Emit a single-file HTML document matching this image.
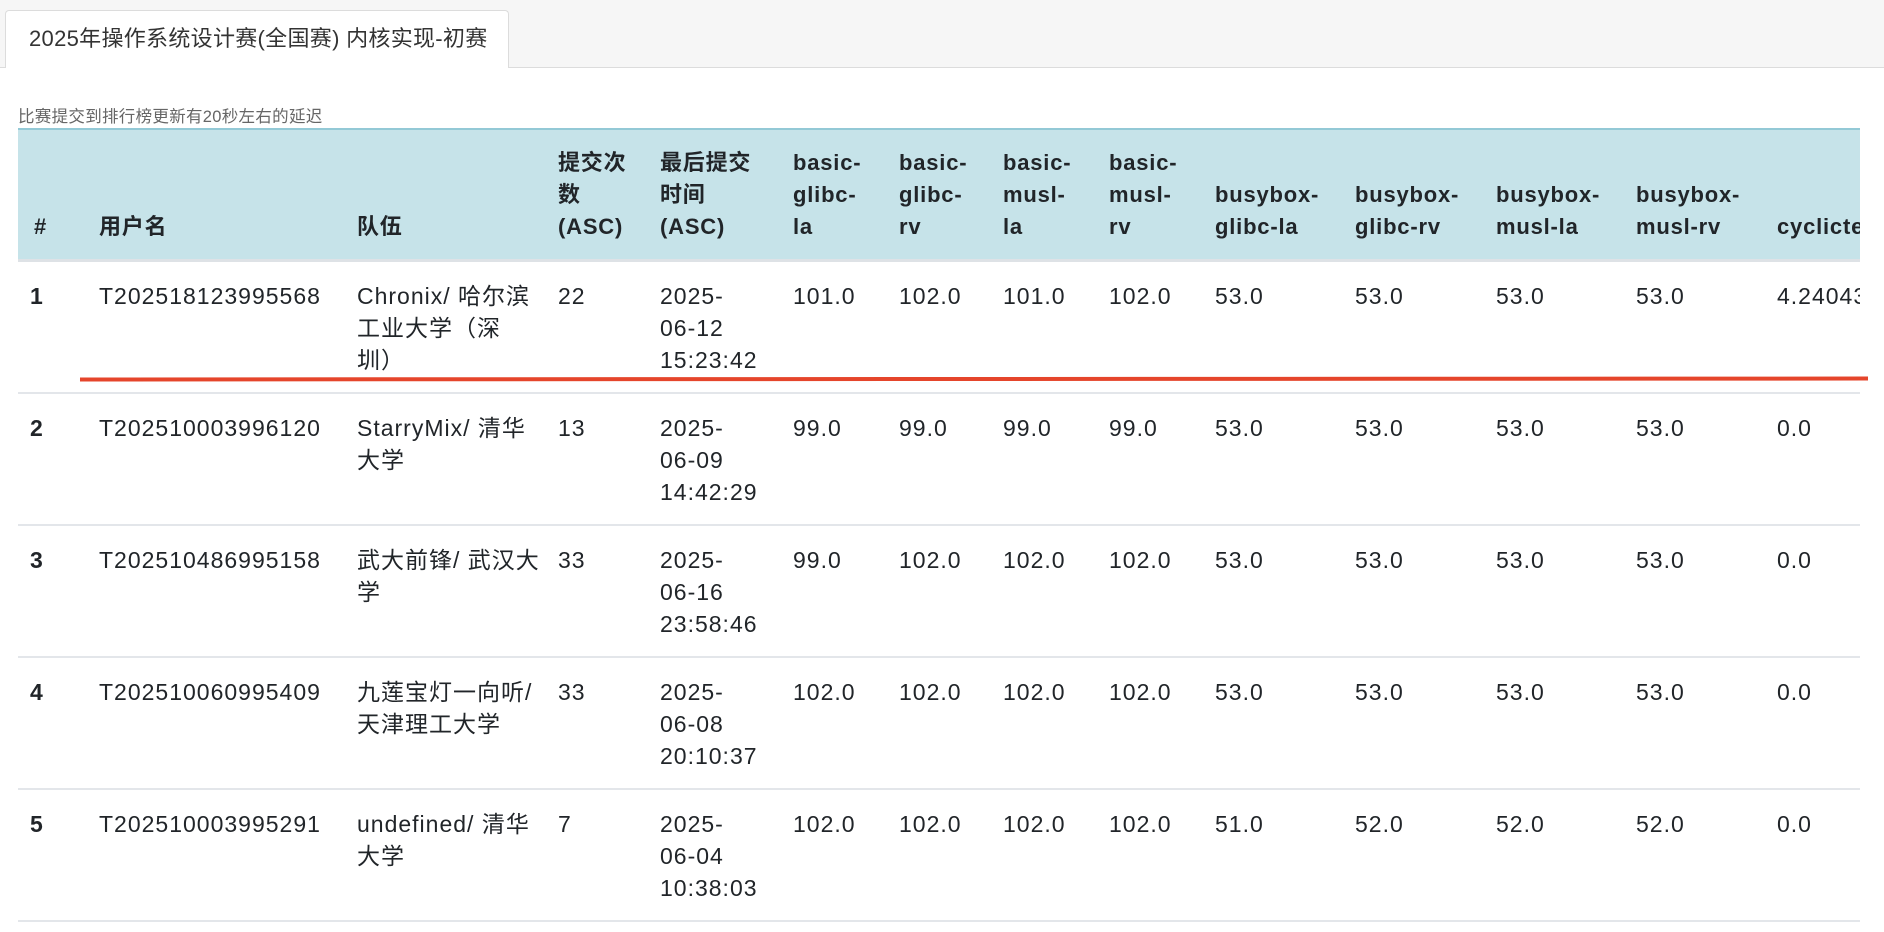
<!DOCTYPE html>
<html><head><meta charset="utf-8"><style>
*{margin:0;padding:0;box-sizing:border-box}
body{width:1884px;height:932px;overflow:hidden;background:#fff;font-family:"Liberation Sans","Noto Sans CJK SC",sans-serif;color:#212529;position:relative}
.top{position:absolute;left:0;top:0;width:1884px;height:68px;background:#f6f6f6;border-bottom:1px solid #dcdcdc}
.tab{position:absolute;left:5px;top:10px;width:504px;height:58px;background:#fff;border:1px solid #dcdcdc;border-bottom:none;border-radius:4px 4px 0 0;font-size:22px;line-height:56px;padding-left:23px;color:#333;letter-spacing:0.3px}
.note{position:absolute;left:18px;top:103px;font-size:16.5px;color:#666;letter-spacing:0.3px}
.wrap{position:absolute;left:18px;top:128px;width:1842px;height:804px;overflow:hidden}
.head{position:absolute;left:0;top:0;width:1842px;height:134px;background:#c6e3e9;border-top:2px solid #93c9d6;border-bottom:3px solid #dee2e6}
.row{position:absolute;left:0;width:1842px;height:132px;border-bottom:2px solid #e3e6ea}
.c{position:absolute;white-space:nowrap;font-size:23px;line-height:32px;letter-spacing:1px}
.h{font-weight:bold;font-size:22px;letter-spacing:0.8px;line-height:32px;bottom:16px;position:absolute;white-space:nowrap}
.b{font-weight:bold}
.red{position:absolute;left:80px;top:377px;width:1788px;height:4px;background:#e5452b;transform:rotate(-0.03deg)}
</style></head><body>
<div class="top"><div class="tab">2025年操作系统设计赛(全国赛) 内核实现-初赛</div></div>
<div class="note">比赛提交到排行榜更新有20秒左右的延迟</div>
<div class="wrap">
<div class="head">
<div class="h" style="left:16px">#</div>
<div class="h" style="left:81px">用户名</div>
<div class="h" style="left:339px">队伍</div>
<div class="h" style="left:540px">提交次<br>数<br>(ASC)</div>
<div class="h" style="left:642px">最后提交<br>时间<br>(ASC)</div>
<div class="h" style="left:775px">basic-<br>glibc-<br>la</div>
<div class="h" style="left:881px">basic-<br>glibc-<br>rv</div>
<div class="h" style="left:985px">basic-<br>musl-<br>la</div>
<div class="h" style="left:1091px">basic-<br>musl-<br>rv</div>
<div class="h" style="left:1197px">busybox-<br>glibc-la</div>
<div class="h" style="left:1337px">busybox-<br>glibc-rv</div>
<div class="h" style="left:1478px">busybox-<br>musl-la</div>
<div class="h" style="left:1618px">busybox-<br>musl-rv</div>
<div class="h" style="left:1759px">cyclictest</div>
</div>
<div class="row" style="top:134px">
<div class="c b" style="left:12px;top:18px">1</div>
<div class="c" style="left:81px;top:18px">T202518123995568</div>
<div class="c" style="left:339px;top:18px">Chronix/ 哈尔滨<br>工业大学（深<br>圳）</div>
<div class="c" style="left:540px;top:18px">22</div>
<div class="c" style="left:642px;top:18px">2025-<br>06-12<br>15:23:42</div>
<div class="c" style="left:775px;top:18px">101.0</div>
<div class="c" style="left:881px;top:18px">102.0</div>
<div class="c" style="left:985px;top:18px">101.0</div>
<div class="c" style="left:1091px;top:18px">102.0</div>
<div class="c" style="left:1197px;top:18px">53.0</div>
<div class="c" style="left:1337px;top:18px">53.0</div>
<div class="c" style="left:1478px;top:18px">53.0</div>
<div class="c" style="left:1618px;top:18px">53.0</div>
<div class="c" style="left:1759px;top:18px">4.240433</div>
</div>
<div class="row" style="top:266px">
<div class="c b" style="left:12px;top:18px">2</div>
<div class="c" style="left:81px;top:18px">T202510003996120</div>
<div class="c" style="left:339px;top:18px">StarryMix/ 清华<br>大学</div>
<div class="c" style="left:540px;top:18px">13</div>
<div class="c" style="left:642px;top:18px">2025-<br>06-09<br>14:42:29</div>
<div class="c" style="left:775px;top:18px">99.0</div>
<div class="c" style="left:881px;top:18px">99.0</div>
<div class="c" style="left:985px;top:18px">99.0</div>
<div class="c" style="left:1091px;top:18px">99.0</div>
<div class="c" style="left:1197px;top:18px">53.0</div>
<div class="c" style="left:1337px;top:18px">53.0</div>
<div class="c" style="left:1478px;top:18px">53.0</div>
<div class="c" style="left:1618px;top:18px">53.0</div>
<div class="c" style="left:1759px;top:18px">0.0</div>
</div>
<div class="row" style="top:398px">
<div class="c b" style="left:12px;top:18px">3</div>
<div class="c" style="left:81px;top:18px">T202510486995158</div>
<div class="c" style="left:339px;top:18px">武大前锋/ 武汉大<br>学</div>
<div class="c" style="left:540px;top:18px">33</div>
<div class="c" style="left:642px;top:18px">2025-<br>06-16<br>23:58:46</div>
<div class="c" style="left:775px;top:18px">99.0</div>
<div class="c" style="left:881px;top:18px">102.0</div>
<div class="c" style="left:985px;top:18px">102.0</div>
<div class="c" style="left:1091px;top:18px">102.0</div>
<div class="c" style="left:1197px;top:18px">53.0</div>
<div class="c" style="left:1337px;top:18px">53.0</div>
<div class="c" style="left:1478px;top:18px">53.0</div>
<div class="c" style="left:1618px;top:18px">53.0</div>
<div class="c" style="left:1759px;top:18px">0.0</div>
</div>
<div class="row" style="top:530px">
<div class="c b" style="left:12px;top:18px">4</div>
<div class="c" style="left:81px;top:18px">T202510060995409</div>
<div class="c" style="left:339px;top:18px">九莲宝灯一向听/<br>天津理工大学</div>
<div class="c" style="left:540px;top:18px">33</div>
<div class="c" style="left:642px;top:18px">2025-<br>06-08<br>20:10:37</div>
<div class="c" style="left:775px;top:18px">102.0</div>
<div class="c" style="left:881px;top:18px">102.0</div>
<div class="c" style="left:985px;top:18px">102.0</div>
<div class="c" style="left:1091px;top:18px">102.0</div>
<div class="c" style="left:1197px;top:18px">53.0</div>
<div class="c" style="left:1337px;top:18px">53.0</div>
<div class="c" style="left:1478px;top:18px">53.0</div>
<div class="c" style="left:1618px;top:18px">53.0</div>
<div class="c" style="left:1759px;top:18px">0.0</div>
</div>
<div class="row" style="top:662px">
<div class="c b" style="left:12px;top:18px">5</div>
<div class="c" style="left:81px;top:18px">T202510003995291</div>
<div class="c" style="left:339px;top:18px">undefined/ 清华<br>大学</div>
<div class="c" style="left:540px;top:18px">7</div>
<div class="c" style="left:642px;top:18px">2025-<br>06-04<br>10:38:03</div>
<div class="c" style="left:775px;top:18px">102.0</div>
<div class="c" style="left:881px;top:18px">102.0</div>
<div class="c" style="left:985px;top:18px">102.0</div>
<div class="c" style="left:1091px;top:18px">102.0</div>
<div class="c" style="left:1197px;top:18px">51.0</div>
<div class="c" style="left:1337px;top:18px">52.0</div>
<div class="c" style="left:1478px;top:18px">52.0</div>
<div class="c" style="left:1618px;top:18px">52.0</div>
<div class="c" style="left:1759px;top:18px">0.0</div>
</div>
</div>
<div class="red"></div>
</body></html>
